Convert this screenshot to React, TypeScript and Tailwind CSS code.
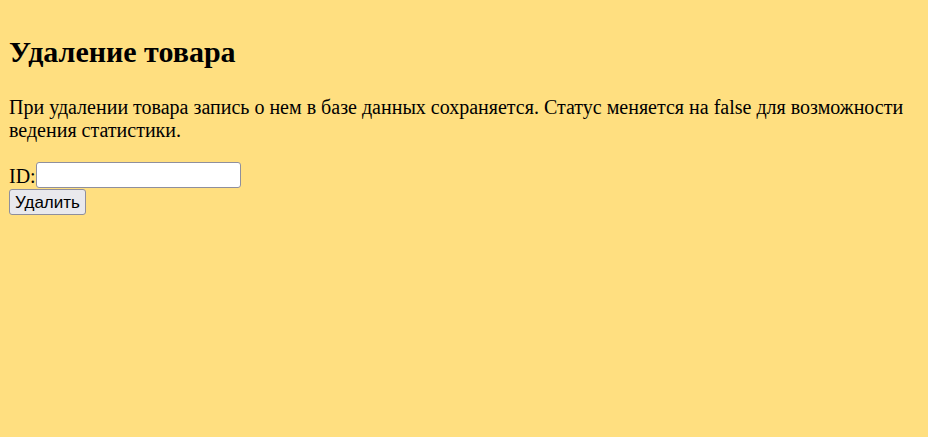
export default function App() {
  return (
    <div className="min-h-screen flow-root bg-[#ffdf80] px-[9px] pt-[10px] font-['Liberation_Serif',serif] text-black">
      <h2 className="my-[24.9px] text-[30px] font-bold leading-[1.15]">Удаление товара</h2>
      <p className="mt-[27px] mb-[20px] text-[20px] leading-[1.15]">
        При удалении товара запись о нем в базе данных сохраняется. Статус меняется на false для возможности ведения
        статистики.
      </p>
      <form className="text-[20px] leading-[1.15]">
        <label htmlFor="id">ID:</label>
        <input
          id="id"
          type="text"
          className="h-[26px] w-[205px] rounded-[3px] border border-[#8f8f9d] bg-white px-[2px] align-bottom"
        />
        <br />
        <button
          type="button"
          className="mt-[1px] h-[26px] rounded-[3px] border border-[#8f8f9d] bg-[#e9e9ed] px-[5px] font-['Liberation_Sans',sans-serif] text-[17px] leading-none"
        >
          Удалить
        </button>
      </form>
    </div>
  )
}
